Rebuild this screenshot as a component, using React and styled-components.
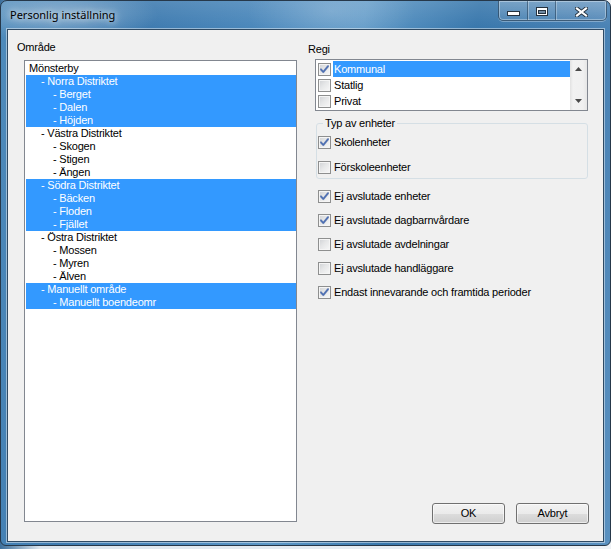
import React from "react";
import styled, { createGlobalStyle } from "styled-components";

const GlobalStyle = createGlobalStyle`
  html, body { margin: 0; padding: 0; }
  body {
    background: #e3e8ee;
    font-family: "Liberation Sans", Arial, sans-serif;
  }
  #root { width: 611px; height: 549px; overflow: hidden; }
`;

const Desktop = styled.div`
  width: 611px;
  height: 549px;
  background: linear-gradient(90deg, #3c6f9c 0, #dde6ee 40px, #eef2f6 100%);
`;

const Window = styled.div`
  box-sizing: border-box;
  width: 611px;
  height: 546px;
  display: flex;
  flex-direction: column;
  border: 1px solid #26384a;
  border-radius: 7px 7px 6px 6px;
  overflow: hidden;
  background:
    radial-gradient(ellipse 140px 40px at 60px 14px, rgba(255, 255, 255, 0.28), transparent 70%),
    radial-gradient(ellipse 120px 60px at 330px 10px, rgba(255, 255, 255, 0.18), transparent 70%),
    linear-gradient(180deg, rgba(255, 255, 255, 0.12) 0, rgba(255, 255, 255, 0) 28px),
    linear-gradient(100deg, #4f8bbb 0%, #3e7bb0 22%, #4f8cbf 42%, #5c97c6 52%, #3877ac 68%, #467fb2 84%, #5a91c0 100%);
`;

const TitleBar = styled.div`
  flex: none;
  height: 28px;
  display: flex;
  justify-content: space-between;
  align-items: flex-start;
  padding: 0 3px 0 9px;
`;

const Title = styled.div`
  margin-top: 6px;
  font-family: "Noto Sans", "Open Sans", sans-serif;
  font-size: 11px;
  line-height: 15px;
  color: #000;
  text-shadow: 0 0 6px rgba(255, 255, 255, 0.95), 0 0 12px rgba(255, 255, 255, 0.7);
`;

const CaptionGroup = styled.div`
  display: flex;
  height: 20px;
  box-sizing: border-box;
  border: 1px solid rgba(20, 40, 60, 0.55);
  border-top: none;
  border-radius: 0 0 5px 5px;
  overflow: hidden;
  box-shadow: inset 0 0 0 1px rgba(255, 255, 255, 0.35), 0 1px 0 rgba(255, 255, 255, 0.3);
  background: linear-gradient(180deg, rgba(255, 255, 255, 0.22), rgba(255, 255, 255, 0.08));
`;

const CaptionButton = styled.div`
  width: ${(p) => p.$w}px;
  box-sizing: border-box;
  display: flex;
  justify-content: center;
  padding-top: ${(p) => p.$top}px;
  & + & {
    border-left: 1px solid rgba(20, 40, 60, 0.45);
    box-shadow: inset 1px 0 0 rgba(255, 255, 255, 0.3);
  }
`;

const Client = styled.div`
  flex: 1;
  margin: 0 6px 3px 6px;
  border: 1px solid #2f4a63;
  background: #f0f0f0;
  display: grid;
  grid-template-columns: 289px 1fr;
  box-shadow: 0 0 0 1px rgba(255, 255, 255, 0.45);
  font-size: 11px;
  letter-spacing: -0.2px;
  color: #000;
`;

const LeftCol = styled.div`
  display: flex;
  flex-direction: column;
  padding: 11px 0 19px 9px;
  min-height: 0;
`;

const RightCol = styled.div`
  display: flex;
  flex-direction: column;
  padding: 13px 14px 17px 11px;
`;

const Label = styled.div`
  line-height: 13px;
  height: 13px;
`;

const TreeList = styled.div`
  flex: 1;
  margin: 6px 0 0 7px;
  width: 273px;
  box-sizing: border-box;
  border: 1px solid #828790;
  background: #fff;
  padding: 1px 0 0 1px;
`;

const TreeRow = styled.div`
  height: 13px;
  line-height: 13px;
  white-space: nowrap;
  padding-left: ${(p) => 3 + p.$level * 12}px;
  background: ${(p) => (p.$sel ? "#3399ff" : "transparent")};
  color: ${(p) => (p.$sel ? "#fff" : "#000")};
`;

const RegiList = styled.div`
  margin: 3px 0 0 7px;
  width: 273px;
  height: 52px;
  box-sizing: border-box;
  border: 1px solid #828790;
  background: #fff;
  display: flex;
`;

const RegiItems = styled.div`
  flex: 1;
  padding: 1px 0;
`;

const RegiRow = styled.div`
  height: 16px;
  display: flex;
  align-items: center;
`;

const RegiText = styled.span`
  flex: 1;
  align-self: stretch;
  margin-left: 2px;
  padding-left: 1px;
  line-height: 16px;
  background: ${(p) => (p.$sel ? "#3399ff" : "transparent")};
  color: ${(p) => (p.$sel ? "#fff" : "#000")};
`;

const ScrollBar = styled.div`
  width: 17px;
  display: flex;
  flex-direction: column;
  justify-content: space-between;
  align-items: center;
  padding: 7px 0 7px;
  box-sizing: border-box;
  background: linear-gradient(90deg, #e2e2e2 0, #f2f2f2 3px, #f0f0f0 13px, #e6e6e6 17px);
`;

const Group = styled.fieldset`
  margin: 6px 0 0 8px;
  width: 272px;
  box-sizing: border-box;
  padding: 0 0 4px 0;
  border: 1px solid #d5dfe5;
  border-radius: 3px;
  min-width: 0;
`;

const Legend = styled.legend`
  margin-left: 6px;
  padding: 0 2px;
  line-height: 13px;
  font-size: 11px;
`;

const CheckRow = styled.label`
  display: flex;
  align-items: center;
  height: 13px;
  margin: ${(p) => p.$mt || 0}px 0 0 ${(p) => p.$ml || 0}px;
  line-height: 13px;
  white-space: nowrap;
`;

const CheckText = styled.span`
  margin-left: 3px;
`;

const Box = styled.span`
  box-sizing: border-box;
  width: 13px;
  height: 13px;
  flex: none;
  border: 1px solid #8e8f8f;
  background: linear-gradient(135deg, #cfd1d4 0%, #e6e7e8 45%, #f8f8f8 100%);
  box-shadow: inset 0 0 0 1px #f5f5f5;
  display: flex;
  align-items: center;
  justify-content: center;
  margin-left: ${(p) => p.$ml || 0}px;
`;

const ButtonRow = styled.div`
  margin-top: auto;
  display: flex;
  justify-content: flex-end;
  gap: 11px;
`;

const Button = styled.button`
  width: 73px;
  height: 21px;
  box-sizing: border-box;
  border: 1px solid #707070;
  border-radius: 3px;
  background: linear-gradient(180deg, #f2f2f2 0%, #ebebeb 50%, #dddddd 51%, #cfcfcf 100%);
  box-shadow: inset 0 0 0 1px rgba(255, 255, 255, 0.6);
  font-family: "Liberation Sans", Arial, sans-serif;
  font-size: 11px;
  letter-spacing: -0.2px;
  color: #000;
  padding: 0;
  line-height: 19px;
`;

function Check({ checked, ml }) {
  return (
    <Box $ml={ml}>
      {checked && (
        <svg width="11" height="11" viewBox="0 0 11 11">
          <path d="M2 5.4 L4.3 8 L9 2.2" fill="none" stroke="#2a4680" strokeWidth="2.2" strokeLinejoin="round" strokeLinecap="round" opacity="0.35" />
          <path d="M2 5.4 L4.3 8 L9 2.2" fill="none" stroke="#4c6fb4" strokeWidth="1.5" strokeLinejoin="round" strokeLinecap="round" />
        </svg>
      )}
    </Box>
  );
}

const tree = [
  ["Mönsterby", 0, false],
  ["- Norra Distriktet", 1, true],
  ["- Berget", 2, true],
  ["- Dalen", 2, true],
  ["- Höjden", 2, true],
  ["- Västra Distriktet", 1, false],
  ["- Skogen", 2, false],
  ["- Stigen", 2, false],
  ["- Ängen", 2, false],
  ["- Södra Distriktet", 1, true],
  ["- Bäcken", 2, true],
  ["- Floden", 2, true],
  ["- Fjället", 2, true],
  ["- Östra Distriktet", 1, false],
  ["- Mossen", 2, false],
  ["- Myren", 2, false],
  ["- Älven", 2, false],
  ["- Manuellt område", 1, true],
  ["- Manuellt boendeomr", 2, true],
];

const regi = [
  ["Kommunal", true, true],
  ["Statlig", false, false],
  ["Privat", false, false],
];

const extras = [
  ["Ej avslutade enheter", true],
  ["Ej avslutade dagbarnvårdare", true],
  ["Ej avslutade avdelningar", false],
  ["Ej avslutade handläggare", false],
  ["Endast innevarande och framtida perioder", true],
];

export default function App() {
  return (
    <>
      <GlobalStyle />
      <Desktop>
        <Window>
          <TitleBar>
            <Title>Personlig inställning</Title>
            <CaptionGroup>
              <CaptionButton $w={28} $top={10}>
                <svg width="13" height="5" viewBox="0 0 13 5">
                  <rect x="0.5" y="0.5" width="12" height="4" fill="#fff" stroke="#25323f" />
                </svg>
              </CaptionButton>
              <CaptionButton $w={28} $top={6}>
                <svg width="12" height="9" viewBox="0 0 12 9">
                  <rect x="0.5" y="0.5" width="11" height="8" fill="#fff" stroke="#25323f" />
                  <rect x="2.5" y="3.5" width="7" height="3" fill="#6f8aa3" stroke="#25323f" />
                </svg>
              </CaptionButton>
              <CaptionButton $w={51} $top={6}>
                <svg width="13" height="10" viewBox="0 0 13 10">
                  <path d="M2 1.5 L11 8.5 M11 1.5 L2 8.5" stroke="#25323f" strokeWidth="4" strokeLinecap="square" />
                  <path d="M2 1.5 L11 8.5 M11 1.5 L2 8.5" stroke="#fff" strokeWidth="2.2" strokeLinecap="square" />
                </svg>
              </CaptionButton>
            </CaptionGroup>
          </TitleBar>
          <Client>
            <LeftCol>
              <Label>Område</Label>
              <TreeList>
                {tree.map(([t, l, s], i) => (
                  <TreeRow key={i} $level={l} $sel={s}>
                    {t}
                  </TreeRow>
                ))}
              </TreeList>
            </LeftCol>
            <RightCol>
              <Label>Regi</Label>
              <RegiList>
                <RegiItems>
                  {regi.map(([t, c, s]) => (
                    <RegiRow key={t}>
                      <Check checked={c} ml={2} />
                      <RegiText $sel={s}>{t}</RegiText>
                    </RegiRow>
                  ))}
                </RegiItems>
                <ScrollBar>
                  <svg width="7" height="4" viewBox="0 0 7 4">
                    <path d="M0 4 L3.5 0 L7 4 Z" fill="#4a4a4a" />
                  </svg>
                  <svg width="7" height="4" viewBox="0 0 7 4">
                    <path d="M0 0 L7 0 L3.5 4 Z" fill="#4a4a4a" />
                  </svg>
                </ScrollBar>
              </RegiList>
              <Group>
                <Legend>Typ av enheter</Legend>
                <CheckRow $mt={6} $ml={1}>
                  <Check checked />
                  <CheckText>Skolenheter</CheckText>
                </CheckRow>
                <CheckRow $mt={12} $ml={1}>
                  <Check />
                  <CheckText>Förskoleenheter</CheckText>
                </CheckRow>
              </Group>
              {extras.map(([t, c]) => (
                <CheckRow key={t} $mt={11} $ml={10}>
                  <Check checked={c} />
                  <CheckText>{t}</CheckText>
                </CheckRow>
              ))}
              <ButtonRow>
                <Button>OK</Button>
                <Button>Avbryt</Button>
              </ButtonRow>
            </RightCol>
          </Client>
        </Window>
      </Desktop>
    </>
  );
}
